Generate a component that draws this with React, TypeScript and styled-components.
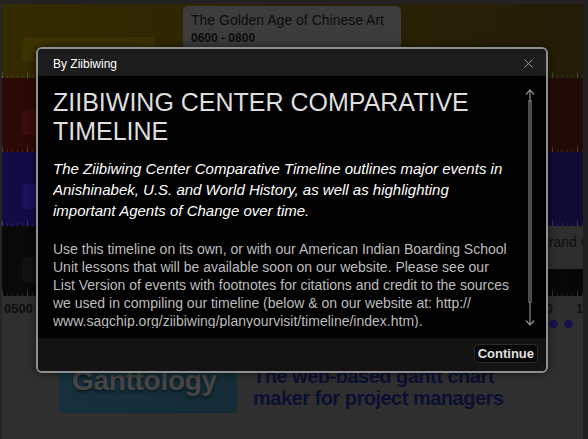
import React from "react";
import styled, { createGlobalStyle } from "styled-components";

const GlobalStyle = createGlobalStyle`
  html, body {
    margin: 0;
    padding: 0;
    background: #1f1f20;
    font-family: "Liberation Sans", Arial, sans-serif;
  }
`;

const Page = styled.div`
  position: relative;
  box-sizing: border-box;
  width: 588px;
  height: 439px;
  overflow: hidden;
  background: #2f2f30;
  border-top: 4px solid #222223;
  border-left: 2px solid #252526;
  border-right: 5px solid #1f1f20;
`;

const Timeline = styled.div`
  display: flex;
  flex-direction: column;
`;

const Band = styled.div<{ $from: string; $to: string; $h: number }>`
  position: relative;
  height: ${(p) => p.$h}px;
  background: linear-gradient(to right, ${(p) => p.$from}, ${(p) => p.$to});
`;

const Ticks = styled.div`
  position: absolute;
  left: 0;
  right: 0;
  bottom: 0;
  height: 6px;
  background:
    repeating-linear-gradient(to right, rgba(255, 255, 255, 0.13) 0 1px, transparent 1px 25px) bottom / 100% 6px no-repeat,
    repeating-linear-gradient(to right, rgba(255, 255, 255, 0.09) 0 1px, transparent 1px 5px) bottom / 100% 3px no-repeat;
`;

const Chip = styled.div<{ $bg: string; $left: number; $top: number; $w: number; $h: number }>`
  position: absolute;
  left: ${(p) => p.$left}px;
  top: ${(p) => p.$top}px;
  width: ${(p) => p.$w}px;
  height: ${(p) => p.$h}px;
  box-sizing: border-box;
  padding: 8px 12px;
  border-radius: 4px;
  background: ${(p) => p.$bg};
  color: #0e0e0e;
  font-size: 14px;
  line-height: 16px;
  white-space: nowrap;
  overflow: hidden;
`;

const ChipLabel = styled.span<{ $c: string }>`
  color: ${(p) => p.$c};
`;

const Axis = styled.div`
  display: flex;
  height: 22px;
  overflow: hidden;
  background: #2e2e2f;
`;

const AxisLabel = styled.div`
  flex: 0 0 52px;
  padding-left: 2px;
  box-sizing: border-box;
  font-size: 13px;
  font-weight: bold;
  line-height: 26px;
  color: #0e0e0e;
`;

const Dots = styled.div`
  display: flex;
  justify-content: flex-end;
  gap: 6px;
  height: 15px;
  padding: 2px 10px 0 0;
  box-sizing: border-box;
`;

const Dot = styled.span<{ $c: string }>`
  width: 9px;
  height: 8px;
  border-radius: 50%;
  background: ${(p) => p.$c};
`;

const Ad = styled.div`
  display: flex;
  gap: 16px;
  padding-left: 57px;
`;

const AdImage = styled.div`
  flex: 0 0 178px;
  height: 80px;
  box-sizing: border-box;
  padding: 33px 0 0 13px;
  background: linear-gradient(135deg, #17323d, #142b35);
`;

const AdLogo = styled.div`
  font-size: 28px;
  line-height: 30px;
  font-weight: bold;
  color: #464646;
  text-shadow: 0 2px 3px rgba(0, 0, 0, 0.5);
  letter-spacing: -0.3px;
`;

const AdText = styled.div`
  padding-top: 32px;
  font-size: 20px;
  line-height: 22px;
  font-weight: bold;
  letter-spacing: -0.5px;
  color: #0a1030;
`;

const Tooltip = styled.div`
  position: absolute;
  left: 181px;
  top: 2px;
  width: 218px;
  height: 62px;
  box-sizing: border-box;
  padding: 6px 8px;
  border-radius: 5px;
  background: #3c3c3c;
  color: #0c0c0c;
`;

const TooltipTitle = styled.div`
  font-size: 14px;
  line-height: 16px;
`;

const TooltipDate = styled.div`
  margin-top: 2px;
  font-size: 12px;
  line-height: 16px;
  font-weight: bold;
`;

const Modal = styled.div`
  position: absolute;
  left: 34px;
  top: 43px;
  width: 512px;
  height: 326px;
  box-sizing: border-box;
  display: flex;
  flex-direction: column;
  border: 2px solid #8f8f8f;
  border-radius: 6px;
  overflow: hidden;
  background: #141414;
  box-shadow: 0 0 8px rgba(0, 0, 0, 0.6);
`;

const Header = styled.div`
  height: 27px;
  display: flex;
  align-items: center;
  justify-content: space-between;
  padding: 2px 13px 0 15px;
  box-sizing: border-box;
  background: #1c1c1c;
  color: #fff;
  font-size: 12px;
`;

const Body = styled.div`
  height: 262px;
  box-sizing: border-box;
  display: flex;
  justify-content: space-between;
  padding: 12px 11px 10px 15px;
  background: #000;
`;

const Content = styled.div`
  width: 460px;
  height: 240px;
  overflow: hidden;
`;

const Title = styled.h1`
  margin: 0;
  font-size: 25px;
  line-height: 29px;
  font-weight: normal;
  color: #dedede;
`;

const Lead = styled.p`
  margin: 12px 0 0;
  font-size: 15px;
  line-height: 21px;
  font-style: italic;
  color: #fff;
`;

const Text = styled.p`
  margin: 19px 0 0;
  font-size: 14px;
  line-height: 18px;
  color: #bdbdbd;
`;

const Footer = styled.div`
  flex: 1;
  display: flex;
  justify-content: flex-end;
  align-items: flex-start;
  padding: 6px 8px 0 0;
  background: #131313;
`;

const ContinueButton = styled.button`
  height: 19px;
  padding: 0 3px;
  border: 1px solid #2a2a2a;
  border-radius: 4px;
  background: #070707;
  color: #e2e2e2;
  font-family: "Liberation Sans", Arial, sans-serif;
  font-size: 13px;
  font-weight: bold;
  line-height: 16px;
  text-shadow: 0 0 1px #000;
`;

const CloseIcon = () => (
  <svg width="9" height="9" viewBox="0 0 9 9">
    <path d="M0.5 0.5 L8.5 8.5 M8.5 0.5 L0.5 8.5" stroke="#9a9a9a" strokeWidth="1" fill="none" />
  </svg>
);

const ScrollBar = () => (
  <svg width="10" height="240" viewBox="0 0 10 240">
    <rect x="3" y="12" width="4" height="203" fill="#4b4b4b" />
    <path d="M5 2 V14 M1 6.5 L5 2 L9 6.5" stroke="#8c8c8c" strokeWidth="1.2" fill="none" />
    <path d="M5 214 V237 M1 232.5 L5 237 L9 232.5" stroke="#8c8c8c" strokeWidth="1.2" fill="none" />
  </svg>
);

const years = ["0500", "0600", "0700", "0800", "0900", "1000", "1100", "1200", "1300", "1400", "1500", "1600"];

export default function App() {
  return (
    <>
      <GlobalStyle />
      <Page>
        <Timeline>
          <Band $from="#342b00" $to="#231c06" $h={74}>
            <Chip $bg="#3c3200" $left={20} $top={33} $w={133} $h={24}>
              <ChipLabel $c="#1c1800">Agents of Change</ChipLabel>
            </Chip>
            <Ticks />
          </Band>
          <Band $from="#2c0905" $to="#220a08" $h={74}>
            <Chip $bg="#380d0a" $left={20} $top={32} $w={80} $h={25} />
            <Ticks />
          </Band>
          <Band $from="#110c46" $to="#0f0b33" $h={74}>
            <Chip $bg="#19105c" $left={20} $top={32} $w={80} $h={25} />
            <Ticks />
          </Band>
          <Band $from="#090909" $to="#070707" $h={70}>
            <Chip $bg="#111111" $left={20} $top={31} $w={80} $h={26} />
            <Chip $bg="#2e2e2e" $left={524} $top={0} $w={80} $h={43}>
              Grand Canal
            </Chip>
            <Ticks />
          </Band>
        </Timeline>
        <Axis>
          {years.map((y) => (
            <AxisLabel key={y}>{y}</AxisLabel>
          ))}
        </Axis>
        <Dots>
          <Dot $c="#35100d" />
          <Dot $c="#15114a" />
          <Dot $c="#15114a" />
        </Dots>
        <Ad>
          <AdImage>
            <AdLogo>Ganttology</AdLogo>
          </AdImage>
          <AdText>
            The web-based gantt chart
            <br />
            maker for project managers
          </AdText>
        </Ad>
        <Tooltip>
          <TooltipTitle>The Golden Age of Chinese Art</TooltipTitle>
          <TooltipDate>0600 - 0800</TooltipDate>
        </Tooltip>
        <Modal>
          <Header>
            <span>By Ziibiwing</span>
            <CloseIcon />
          </Header>
          <Body>
            <Content>
              <Title>ZIIBIWING CENTER COMPARATIVE TIMELINE</Title>
              <Lead>
                The Ziibiwing Center Comparative Timeline outlines major events in Anishinabek, U.S. and World
                History, as well as highlighting important Agents of Change over time.
              </Lead>
              <Text>
                Use this timeline on its own, or with our American Indian Boarding School Unit lessons that will be
                available soon on our website. Please see our List Version of events with footnotes for citations and
                credit to the sources we used in compiling our timeline (below &amp; on our website at: http://
                <wbr />
                www.sagchip.org/ziibiwing/planyourvisit/timeline/index.htm).
              </Text>
            </Content>
            <ScrollBar />
          </Body>
          <Footer>
            <ContinueButton>Continue</ContinueButton>
          </Footer>
        </Modal>
      </Page>
    </>
  );
}
